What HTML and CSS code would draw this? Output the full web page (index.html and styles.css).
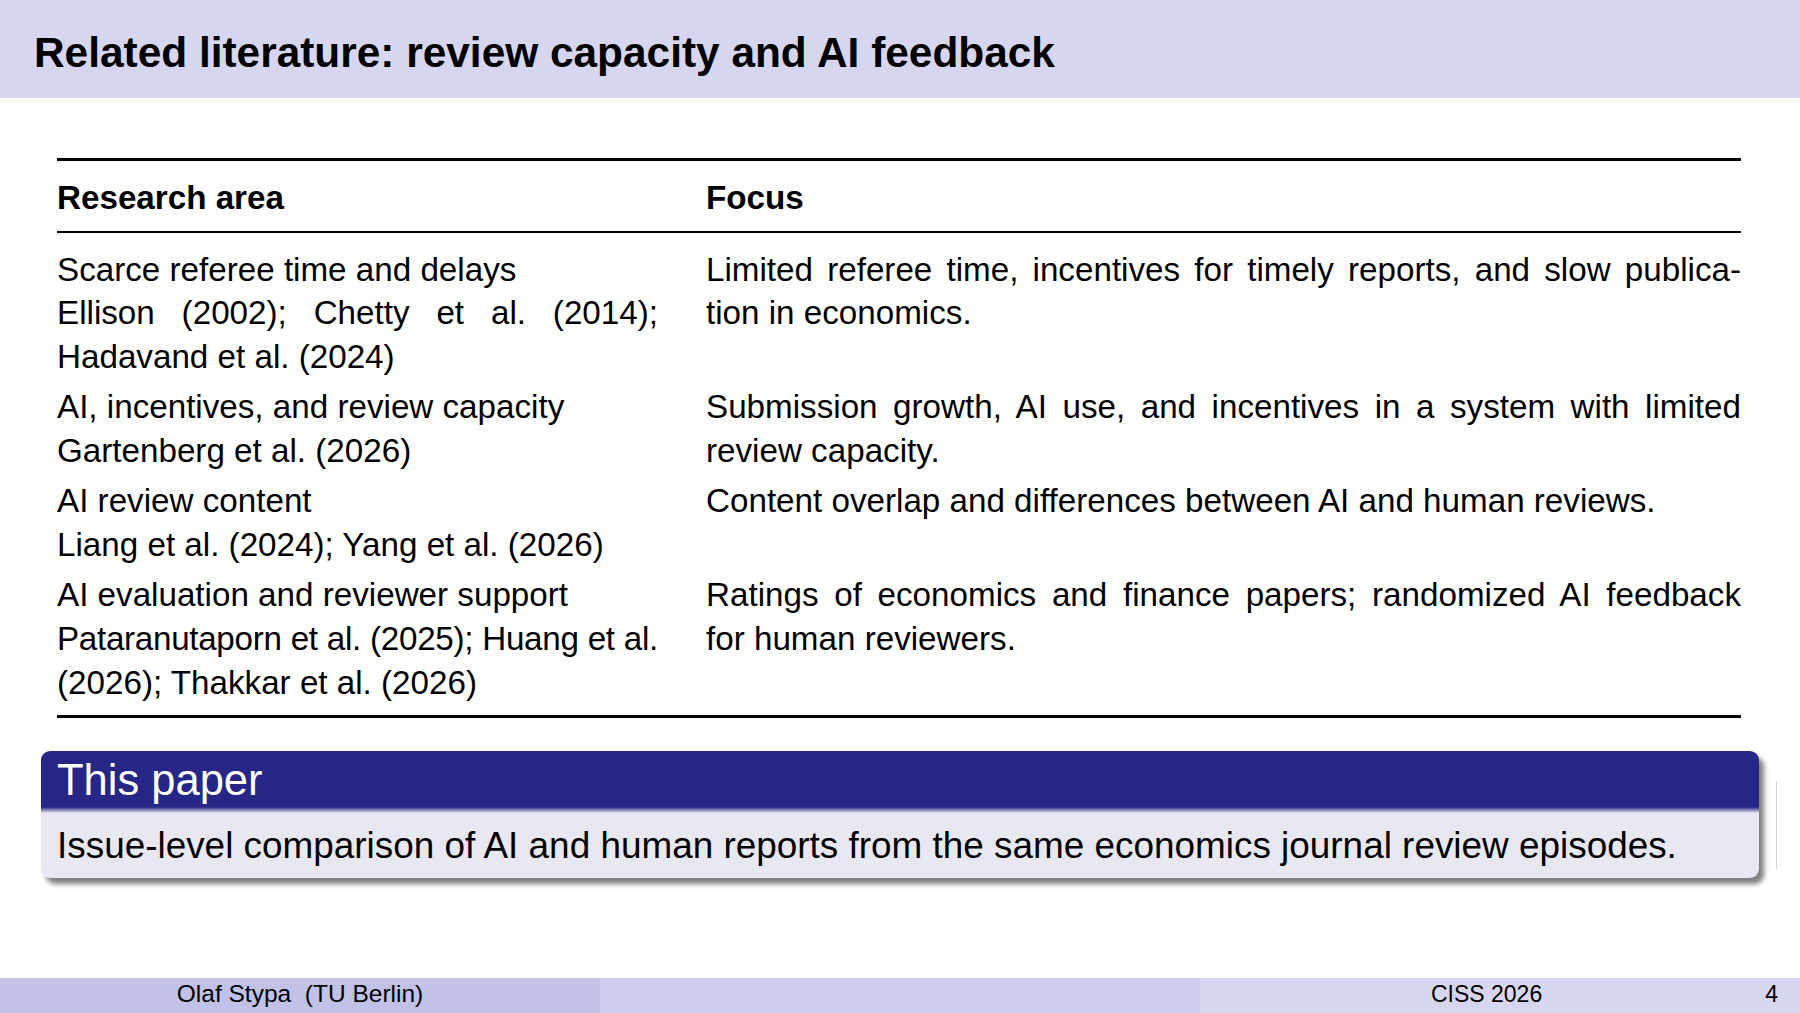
FILE: index.html
```html
<!DOCTYPE html>
<html>
<head>
<meta charset="utf-8">
<link rel="stylesheet" href="styles.css">
</head>
<body>
<div class="slide">
  <header class="frametitle">
    <h1>Related literature: review capacity and AI feedback</h1>
  </header>
  <main class="content">
    <div class="table">
      <div class="thead">
        <div class="cell th">Research area</div>
        <div class="cell th">Focus</div>
      </div>
      <div class="tbody">
        <div class="row">
          <div class="cell">
            <span class="ln">Scarce referee time and delays</span>
            <span class="ln jl">Ellison (2002); Chetty et al. (2014);</span>
            <span class="ln">Hadavand et al. (2024)</span>
          </div>
          <div class="cell">
            <span class="ln jl">Limited referee time, incentives for timely reports, and slow publica-</span>
            <span class="ln">tion in economics.</span>
          </div>
        </div>
        <div class="row">
          <div class="cell">
            <span class="ln">AI, incentives, and review capacity</span>
            <span class="ln">Gartenberg et al. (2026)</span>
          </div>
          <div class="cell">
            <span class="ln jl">Submission growth, AI use, and incentives in a system with limited</span>
            <span class="ln">review capacity.</span>
          </div>
        </div>
        <div class="row">
          <div class="cell">
            <span class="ln">AI review content</span>
            <span class="ln">Liang et al. (2024); Yang et al. (2026)</span>
          </div>
          <div class="cell">
            <span class="ln">Content overlap and differences between AI and human reviews.</span>
          </div>
        </div>
        <div class="row">
          <div class="cell">
            <span class="ln">AI evaluation and reviewer support</span>
            <span class="ln jl tight">Pataranutaporn et al. (2025); Huang et al.</span>
            <span class="ln">(2026); Thakkar et al. (2026)</span>
          </div>
          <div class="cell">
            <span class="ln jl">Ratings of economics and finance papers; randomized AI feedback</span>
            <span class="ln">for human reviewers.</span>
          </div>
        </div>
      </div>
    </div>
    <section class="block">
      <div class="block-title">This paper</div>
      <div class="block-body">Issue-level comparison of AI and human reports from the same economics journal review episodes.</div>
    </section>
  </main>
  <footer class="footline">
    <div class="foot foot-author">Olaf Stypa&nbsp;&nbsp;(TU Berlin)</div>
    <div class="foot foot-title"></div>
    <div class="foot foot-date"><span class="date">CISS 2026</span><span class="pageno">4</span></div>
  </footer>
</div>
</body>
</html>
```

FILE: styles.css
```css
html, body {
  margin: 0;
  padding: 0;
  background: #ffffff;
}

body {
  font-family: "Liberation Sans", Arial, sans-serif;
  color: #000000;
}

.slide {
  width: 1800px;
  height: 1013px;
  display: flex;
  flex-direction: column;
  overflow: hidden;
}

.frametitle {
  height: 98px;
  background: #d6d6f0;
  display: flex;
  align-items: center;
  padding: 8px 0 0 34px;
  box-sizing: border-box;
  flex-shrink: 0;
}

.frametitle h1 {
  margin: 0;
  font-size: 42.4px;
  font-weight: bold;
  line-height: 1;
}

.content {
  flex: 1;
  padding: 60px 41px 0 41px;
  display: flex;
  flex-direction: column;
}

.table {
  margin: 0 18px 0 16px;
  border-top: 3px solid #000;
  border-bottom: 3px solid #000;
  font-size: 33.2px;
}

.thead,
.row {
  display: grid;
  grid-template-columns: 601px 1fr;
  column-gap: 48px;
}

.thead {
  height: 72px;
  box-sizing: border-box;
  padding-top: 3px;
  align-items: center;
  border-bottom: 2px solid #000;
}

.th {
  font-weight: bold;
  line-height: 43.6px;
}

.tbody {
  padding: 11.5px 0 7.5px 0;
}

.row {
  padding: 3px 0;
}

.cell {
  line-height: 43.9px;
}

.ln {
  display: block;
  white-space: nowrap;
}

.ln.jl {
  white-space: normal;
  text-align: justify;
  text-align-last: justify;
}

.ln.tight {
  letter-spacing: -0.3px;
}

.block {
  position: relative;
  margin-top: 33px;
  border-radius: 9px;
  box-shadow: 5px 6px 5px rgba(0, 0, 0, 0.5);
  background: #e8e8f2;
}

.block::after {
  content: "";
  position: absolute;
  right: -18px;
  top: 30px;
  bottom: 9px;
  width: 1px;
  background: #d4d4d4;
}

.block-title {
  height: 62px;
  box-sizing: border-box;
  padding: 0 16px 3px 16px;
  display: flex;
  align-items: center;
  color: #ffffff;
  font-size: 43.5px;
  border-radius: 9px 9px 0 0;
  background: linear-gradient(to bottom, #262686 0, #262686 56px, #e8e8f2 62px);
}

.block-body {
  height: 65px;
  box-sizing: border-box;
  padding: 1px 16px 0 16px;
  display: flex;
  align-items: center;
  font-size: 36.9px;
  border-radius: 0 0 9px 9px;
}

.footline {
  height: 35px;
  display: grid;
  grid-template-columns: repeat(3, 1fr);
  flex-shrink: 0;
  font-size: 23px;
}

.foot {
  display: flex;
  align-items: center;
  padding-bottom: 3px;
  box-sizing: border-box;
  min-width: 0;
}

.foot-author {
  background: #c2c2e8;
  justify-content: center;
  font-size: 24.5px;
}

.foot-title {
  background: #ccccec;
}

.foot-date {
  background: #d6d6f0;
  justify-content: flex-end;
  padding-right: 22px;
}

.date {
  margin-right: 223px;
}
```
